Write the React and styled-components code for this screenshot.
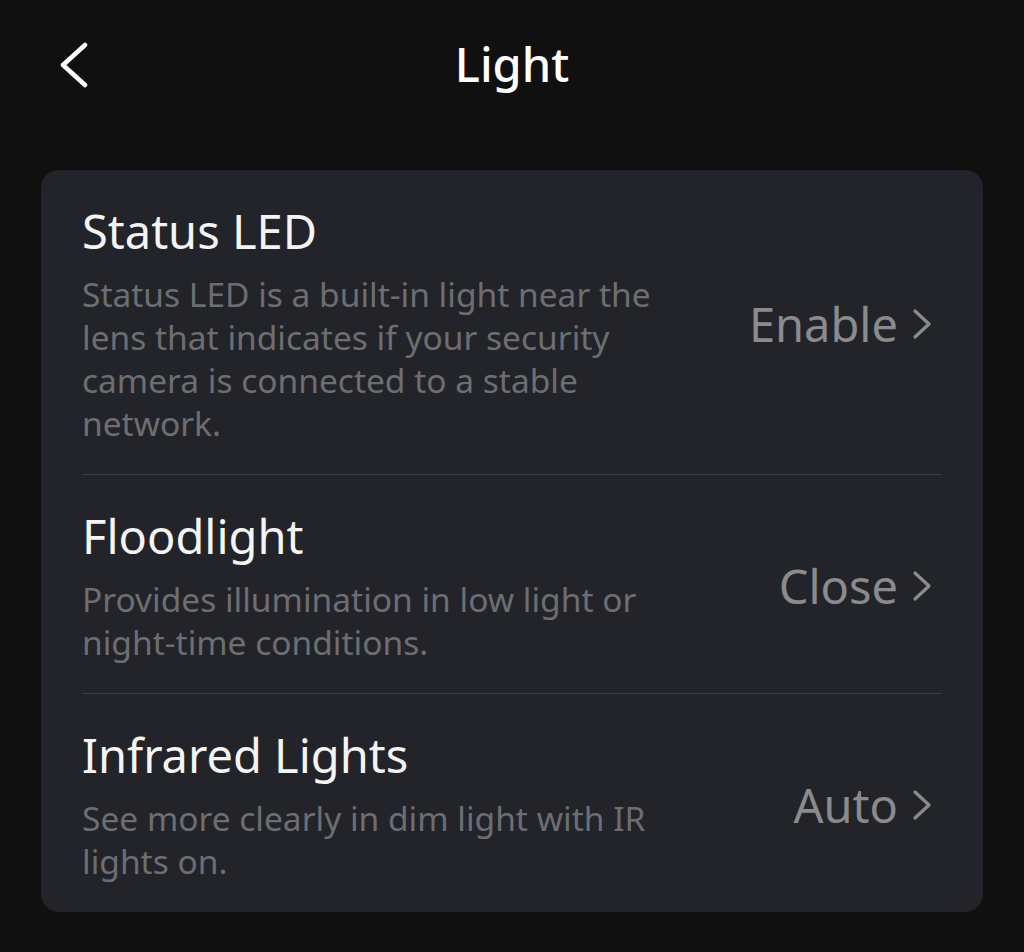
import React from "react"
import styled, { createGlobalStyle } from "styled-components"

const GlobalStyle = createGlobalStyle`
  html, body {
    margin: 0;
    padding: 0;
    background: #101010;
  }
  body {
    font-family: "Noto Sans", "Open Sans", sans-serif;
    -webkit-font-smoothing: antialiased;
  }
`

const Page = styled.div`
  width: 1024px;
  height: 952px;
  background: #101010;
  color: #fff;
  box-sizing: border-box;
  padding: 0 41px;
`

const Header = styled.header`
  height: 170px;
  display: grid;
  grid-template-columns: 60px 1fr 60px;
  align-items: start;
  padding-top: 36px;
  box-sizing: border-box;
`

const BackButton = styled.button`
  background: none;
  border: 0;
  padding: 0;
  margin: 6px 0 0 17px;
  display: flex;
  align-items: center;
  cursor: pointer;
`

const Title = styled.h1`
  margin: 0;
  text-align: center;
  font-size: 47px;
  line-height: 56px;
  font-weight: 500;
`

const Card = styled.section`
  background: #222429;
  border-radius: 18px;
  padding: 0 41px;
`

const Row = styled.div`
  display: flex;
  align-items: center;
  justify-content: space-between;
  padding: 33px 0 29px;
  border-top: ${p => (p.$first ? "none" : "1px solid #3a3c41")};
`

const TextBlock = styled.div`
  width: 640px;
  display: flex;
  flex-direction: column;
  gap: 14px;
`

const RowTitle = styled.div`
  font-size: 47px;
  line-height: 56px;
  color: #f4f4f4;
`

const RowDesc = styled.div`
  font-size: 33.5px;
  line-height: 43px;
  color: #6d6e72;
`

const Value = styled.div`
  display: flex;
  align-items: center;
  gap: 14px;
  padding-right: 10px;
  font-size: 47px;
  color: #8a8b8d;
`

const Chevron = () => (
  <svg width="20" height="32" viewBox="0 0 20 32" fill="none">
    <path d="M3 3 L17 16 L3 29" stroke="#8a8b8d" strokeWidth="3.3" strokeLinecap="round" strokeLinejoin="round" />
  </svg>
)

const items = [
  {
    title: "Status LED",
    desc: "Status LED is a built-in light near the lens that indicates if your security camera is connected to a stable network.",
    value: "Enable",
  },
  {
    title: "Floodlight",
    desc: "Provides illumination in low light or night\u2011time conditions.",
    value: "Close",
  },
  {
    title: "Infrared Lights",
    desc: "See more clearly in dim light with IR lights on.",
    value: "Auto",
  },
]

export default function App() {
  return (
    <>
      <GlobalStyle />
      <Page>
        <Header>
          <BackButton aria-label="Back">
            <svg width="32" height="46" viewBox="0 0 32 46" fill="none">
              <path d="M27 3 L5 23 L27 43" stroke="#fff" strokeWidth="4.5" strokeLinecap="round" strokeLinejoin="round" />
            </svg>
          </BackButton>
          <Title>Light</Title>
          <span />
        </Header>
        <Card>
          {items.map((it, i) => (
            <Row key={it.title} $first={i === 0}>
              <TextBlock>
                <RowTitle>{it.title}</RowTitle>
                <RowDesc>{it.desc}</RowDesc>
              </TextBlock>
              <Value>
                {it.value}
                <Chevron />
              </Value>
            </Row>
          ))}
        </Card>
      </Page>
    </>
  )
}
